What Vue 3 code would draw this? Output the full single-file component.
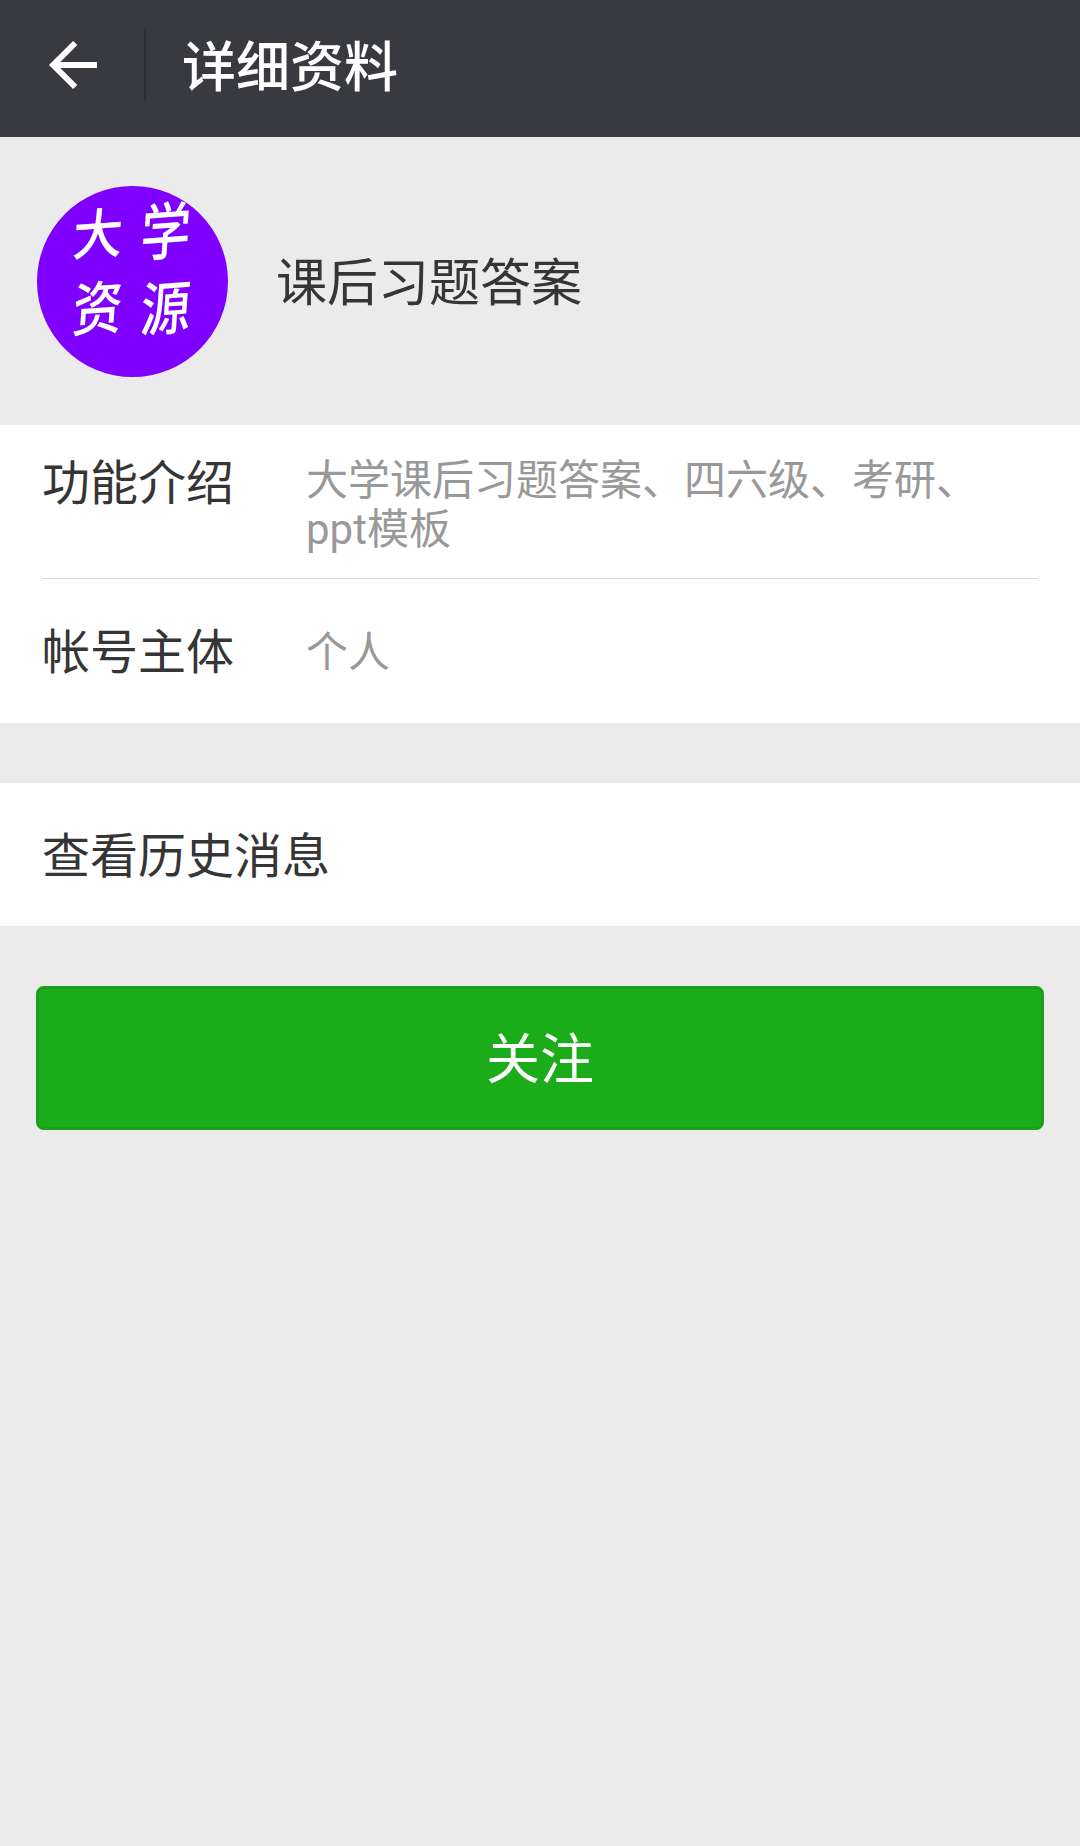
<template>
  <div class="profile-page">
    <header class="top-bar">
      <button class="btn-back" aria-label="返回">
        <svg class="back-icon" viewBox="0 0 50 50" aria-hidden="true">
          <path d="M27.2 3 L5.2 25 L27.2 47 M6 25 H49" />
        </svg>
      </button>
      <h1 class="title">详细资料</h1>
    </header>

    <section class="account">
      <div class="avatar">
        <span v-for="char in avatarChars" :key="char" class="avatar-char">{{ char }}</span>
      </div>
      <h2 class="account-name">课后习题答案</h2>
    </section>

    <section class="info">
      <div v-for="row in infoRows" :key="row.label" class="info-row">
        <span class="label">{{ row.label }}</span>
        <p class="value">{{ row.value }}</p>
      </div>
    </section>

    <section class="history">
      <span class="label">查看历史消息</span>
    </section>

    <button class="btn-follow" @click="followed = true">关注</button>
  </div>
</template>

<script setup>
import { ref } from 'vue'

const followed = ref(false)

const avatarChars = ['大', '学', '资', '源']

const infoRows = [
  { label: '功能介绍', value: '大学课后习题答案、四六级、考研、ppt模板' },
  { label: '帐号主体', value: '个人' }
]
</script>

<style>
body {
  background: #ebebeb;
}
</style>

<style scoped>
.profile-page {
  min-height: 1846px;
  background: #ebebeb;
  color: #353535;
  font-family: Roboto, 'Noto Sans CJK SC', sans-serif;
}

.top-bar {
  display: flex;
  height: 137px;
  box-sizing: border-box;
  padding-top: 29px;
  background: #393a3f;
}

.btn-back {
  display: flex;
  align-items: center;
  width: 146px;
  height: 72px;
  padding: 0 0 0 48px;
  border: none;
  border-right: 2px solid #2e2f33;
  background: none;
  box-sizing: border-box;
  cursor: pointer;
}

.back-icon {
  width: 50px;
  height: 50px;
  fill: none;
  stroke: #fff;
  stroke-width: 6;
}

.title {
  margin: 0 0 0 36px;
  color: #fff;
  font-size: 54px;
  font-weight: 500;
  line-height: 79px;
}

.account {
  display: flex;
  align-items: center;
  height: 288px;
  box-sizing: border-box;
  padding: 0 37px 0 37px;
}

.avatar {
  display: grid;
  grid-template-columns: 68px 68px;
  grid-template-rows: 74px 74px;
  width: 191px;
  height: 191px;
  box-sizing: border-box;
  padding: 7px 0 0 27px;
  border-radius: 50%;
  background: #8000ff;
}

.avatar-char {
  color: #fff;
  font-family: 'Noto Sans CJK SC', sans-serif;
  font-size: 50px;
  font-weight: 500;
  line-height: 74px;
  text-align: center;
  transform: rotate(-4deg) skewX(-8deg) scaleY(1.08);
}

.avatar-char:nth-child(2) {
  transform: translateY(-3px) rotate(-4deg) skewX(-8deg) scaleY(1.24);
}

.avatar-char:nth-child(n + 3) {
  transform: rotate(-4deg) skewX(-8deg) scaleY(1.16);
}

.account-name {
  margin: 0 0 0 48px;
  padding-top: 6px;
  font-size: 51px;
  font-weight: 400;
  line-height: 60px;
}

.info,
.history {
  padding: 0 42px;
  background: #fff;
}

.info-row {
  display: flex;
  align-items: center;
  height: 144px;
  box-sizing: border-box;
  padding-top: 3px;
}

.info-row:first-child {
  align-items: flex-start;
  height: 154px;
  padding-top: 31px;
  border-bottom: 1px solid #d9d9d9;
}

.label {
  width: 264px;
  font-size: 48px;
  line-height: 56px;
}

.value {
  flex: 1;
  margin: 0;
  color: #999;
  font-size: 42px;
  line-height: 49px;
}

.history {
  display: flex;
  align-items: center;
  height: 143px;
  box-sizing: border-box;
  margin-top: 60px;
  padding-top: 5px;
}

.history .label {
  width: auto;
}

.btn-follow {
  display: block;
  width: 1008px;
  height: 144px;
  margin: 60px 36px 0;
  padding: 0 0 6px;
  border: 3px solid #1b9f1a;
  border-radius: 8px;
  background: #1aad19;
  color: #fff;
  font-family: inherit;
  font-size: 54px;
  cursor: pointer;
}
</style>
